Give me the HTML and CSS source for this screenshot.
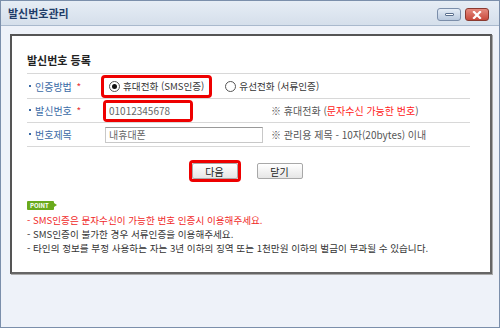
FILE: index.html
```html
<!DOCTYPE html>
<html lang="ko">
<head>
    <meta charset="UTF-8">
    <title>발신번호관리</title>
    <link rel="stylesheet" href="styles.css">
</head>
<body>
    <div class="window">
        <div class="titlebar">
            <h1>발신번호관리</h1>
            <div class="win-btns">
                <span class="btn-min"><i></i></span>
                <span class="btn-close">
                    <svg width="10" height="8" viewBox="0 0 10 8"><path d="M2 1 L8 7 M8 1 L2 7" stroke="#fff" stroke-width="2.2" stroke-linecap="square"/></svg>
                </span>
            </div>
        </div>
        <div class="win-body">
            <div class="panel">
                <h2>발신번호 등록</h2>
                <div class="form">
                    <div class="row">
                        <div class="label">인증방법 <em>*</em></div>
                        <div class="value">
                            <label class="radio mark"><span class="dot on"></span>휴대전화 (SMS인증)</label>
                            <label class="radio"><span class="dot"></span>유선전화 (서류인증)</label>
                        </div>
                    </div>
                    <div class="row">
                        <div class="label">발신번호 <em>*</em></div>
                        <div class="value">
                            <span class="mark mark-input"><input type="text" class="input-num" value="01012345678"></span>
                            <span class="hint">※ 휴대전화 (<b>문자수신 가능한 번호</b>)</span>
                        </div>
                    </div>
                    <div class="row">
                        <div class="label">번호제목</div>
                        <div class="value">
                            <input type="text" class="input-title" value="내휴대폰">
                            <span class="hint">※ 관리용 제목 - 10자(20bytes) 이내</span>
                        </div>
                    </div>
                </div>
                <div class="actions">
                    <span class="mark mark-btn"><button>다음</button></span>
                    <button class="btn-plain">닫기</button>
                </div>
                <div class="notes">
                    <span class="point">POINT</span>
                    <p class="red">- SMS인증은 문자수신이 가능한 번호 인증시 이용해주세요.</p>
                    <p>- SMS인증이 불가한 경우 서류인증을 이용해주세요.</p>
                    <p>- 타인의 정보를 부정 사용하는 자는 3년 이하의 징역 또는 1천만원 이하의 벌금이 부과될 수 있습니다.</p>
                </div>
            </div>
        </div>
    </div>
</body>
</html>
```

FILE: styles.css
```css
* {
    box-sizing: border-box;
}
body {
    margin: 0;
    font-family: "Noto Sans CJK KR", "Liberation Sans", sans-serif;
    font-size: 10px;
    color: #333;
}
.window {
    width: 500px;
    height: 328px;
    border: 1px solid #7b8fab;
    background-color: #eef2f9;
    display: flex;
    flex-direction: column;
}
.titlebar {
    height: 25px;
    background: linear-gradient(#e6edf5, #d5dfeb);
    border-bottom: 1px solid #a9b9cd;
    display: flex;
    align-items: center;
    justify-content: space-between;
    padding: 0 10px 0 7px;
}
.titlebar h1 {
    margin: 0;
    font-size: 11px;
    font-weight: bold;
    color: #1f3c68;
}
.win-btns {
    display: flex;
    gap: 4px;
    margin-top: 3px;
}
.btn-min, .btn-close {
    width: 24px;
    height: 13px;
    border-radius: 3px;
    display: flex;
    align-items: center;
    justify-content: center;
}
.btn-min {
    border: 1px solid #7b8eaa;
    background: linear-gradient(#e4ecf6, #b9c9de);
}
.btn-min i {
    width: 9px;
    height: 3px;
    background: #fff;
    border: 1px solid #5a6f8e;
    border-radius: 1px;
}
.btn-close {
    border: 1px solid #8a3a30;
    background: linear-gradient(#e58a7e, #c8483a);
}
.win-body {
    flex: 1;
    padding: 8px 7px 0 9px;
}
.panel {
    height: 240px;
    background: #fff;
    border: 2px solid #666;
    border-top-color: #555;
    border-left-color: #555;
    box-shadow: 1px 1px 0 #aaa;
    padding: 0 20px 0 15px;
}
.panel h2 {
    margin: 0;
    height: 38px;
    padding-top: 17px;
    font-size: 11px;
    line-height: 14px;
    color: #222;
    border-bottom: 1px solid #d8d8d8;
}
.row {
    display: flex;
    align-items: center;
    height: 24px;
    border-bottom: 1px solid #d8d8d8;
}
.row:first-child {
    height: 25px;
}
.label {
    width: 76px;
    padding-left: 8px;
    position: relative;
    color: #3a6aa6;
    font-size: 10px;
}
.label::before {
    content: "";
    position: absolute;
    left: 2px;
    top: 6px;
    width: 2px;
    height: 2px;
    background: #3a6aa6;
}
.label em {
    font-style: normal;
    color: #e83838;
    margin-left: 2px;
}
.value {
    flex: 1;
    display: flex;
    align-items: center;
}
.mark {
    border: 3px solid #ee0000;
    border-radius: 4px;
}
.radio {
    display: flex;
    align-items: center;
    height: 23px;
    color: #333;
    font-size: 9.6px;
}
.radio.mark {
    padding: 0 5px 0 5px;
    margin-left: -2px;
}
.radio + .radio {
    margin-left: 13px;
}
.dot {
    width: 11px;
    height: 11px;
    border: 1px solid #555;
    border-radius: 50%;
    margin-right: 3px;
    display: flex;
    align-items: center;
    justify-content: center;
}
.dot.on::after {
    content: "";
    width: 5px;
    height: 5px;
    border-radius: 50%;
    background: #111;
}
input {
    font-family: inherit;
    font-size: 10px;
    color: #666;
    border: 1px solid #c8c8c8;
    border-top-color: #999;
    padding: 0 3px;
    height: 16px;
}
.mark-input {
    margin-left: 0;
    display: flex;
}
.input-num {
    width: 84px;
    border: none;
    height: 16px;
}
.input-title {
    width: 158px;
    margin-left: 2px;
}
.hint {
    color: #555;
    margin-left: 8px;
}
.mark-input + .hint {
    margin-left: 78px;
}
.hint b {
    font-weight: normal;
    color: #ff2020;
}
.actions {
    display: flex;
    justify-content: center;
    align-items: center;
    gap: 16px;
    padding: 13px 6px 0 0;
    height: 35px;
}
button {
    font-family: inherit;
    font-size: 10px;
    color: #222;
    background: linear-gradient(#ffffff, #e6e6e6);
    border: 1px solid #a8a8a8;
    border-radius: 2px;
    height: 16px;
    width: 46px;
    padding: 0;
}
.mark-btn {
    display: flex;
    padding: 0;
}
.notes {
    padding: 15px 0 0 0;
    font-size: 9.6px;
}
.point {
    display: inline-block;
    background: #6aaa1c;
    color: #fff;
    font-size: 6px;
    font-weight: bold;
    line-height: 9px;
    padding: 0 5px 0 3px;
    border-radius: 1px;
    position: relative;
}
.point::after {
    content: "";
    position: absolute;
    right: -3px;
    top: 2px;
    border-left: 3px solid #6aaa1c;
    border-top: 2.5px solid transparent;
    border-bottom: 2.5px solid transparent;
}
.notes p {
    margin: 0;
    line-height: 14px;
    color: #333;
}
.notes p.red {
    color: #f02828;
    margin-top: 2px;
}
```
